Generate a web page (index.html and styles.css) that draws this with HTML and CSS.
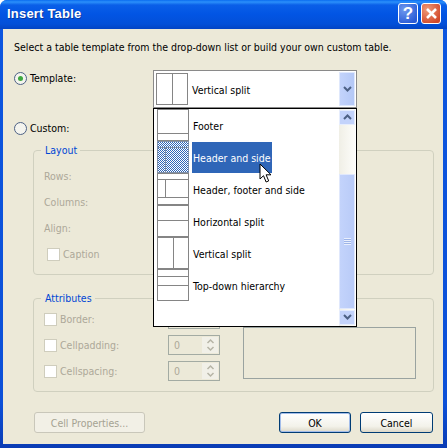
FILE: index.html
```html
<!DOCTYPE html>
<html lang="en">
<head>
    <meta charset="UTF-8">
    <title>Insert Table</title>
    <link rel="stylesheet" href="styles.css">
</head>
<body>
    <svg class="defs" width="0" height="0">
        <pattern id="dither" width="2" height="2" patternUnits="userSpaceOnUse">
            <rect width="2" height="2" fill="#fff"/>
            <rect width="1" height="1" fill="#2f66b8"/>
            <rect x="1" y="1" width="1" height="1" fill="#2f66b8"/>
        </pattern>
    </svg>
    <div class="window">
        <div class="titlebar">
            <span class="title">Insert Table</span>
            <div class="caption-btns">
                <span class="cap-btn help">?</span>
                <span class="cap-btn close">
                    <svg width="13" height="13" viewBox="0 0 13 13"><path d="M2 2l9 9M11 2l-9 9" stroke="#fff" stroke-width="2.6" fill="none"/></svg>
                </span>
            </div>
        </div>
        <div class="content">
            <p class="intro">Select a table template from the drop-down list or build your own custom table.</p>

            <div class="template-row">
                <label class="radio-label"><span class="radio on"></span>Template:</label>
                <div class="combo">
                    <svg class="preview combo-preview" width="32" height="32" viewBox="0 0 32 32"><rect x=".5" y=".5" width="31" height="31"/><path d="M16.5 0v32"/></svg>
                    <span class="combo-text">Vertical split</span>
                    <span class="combo-btn">
                        <svg width="9" height="7" viewBox="0 0 9 7"><path d="M1 1l3.5 3.5L8 1" class="chevron"/></svg>
                    </span>

                    <div class="combo-list">
                        <div class="items">
                            <div class="item">
                                <svg class="preview" width="32" height="32" viewBox="0 0 32 32"><rect x=".5" y=".5" width="31" height="31"/><path d="M0 24.5h32"/></svg>
                                <span class="item-text">Footer</span>
                            </div>
                            <div class="item selected">
                                <svg class="preview" width="32" height="32" viewBox="0 0 32 32"><rect x=".5" y=".5" width="31" height="31" fill="url(#dither)"/><path d="M0 6.5h32M8.5 7v25"/></svg>
                                <span class="item-text">Header and side</span>
                            </div>
                            <div class="item">
                                <svg class="preview" width="32" height="32" viewBox="0 0 32 32"><rect x=".5" y=".5" width="31" height="31"/><path d="M0 6.5h32M0 24.5h32M8.5 7v17"/></svg>
                                <span class="item-text">Header, footer and side</span>
                            </div>
                            <div class="item">
                                <svg class="preview" width="32" height="32" viewBox="0 0 32 32"><rect x=".5" y=".5" width="31" height="31"/><path d="M0 15.5h32"/></svg>
                                <span class="item-text">Horizontal split</span>
                            </div>
                            <div class="item">
                                <svg class="preview" width="32" height="32" viewBox="0 0 32 32"><rect x=".5" y=".5" width="31" height="31"/><path d="M16.5 0v32"/></svg>
                                <span class="item-text">Vertical split</span>
                            </div>
                            <div class="item">
                                <svg class="preview" width="32" height="32" viewBox="0 0 32 32"><rect x=".5" y=".5" width="31" height="31"/><path d="M0 7.5h32M0 16.5h32"/></svg>
                                <span class="item-text">Top-down hierarchy</span>
                            </div>
                        </div>
                        <div class="scrollbar">
                            <span class="scroll-btn">
                                <svg width="9" height="7" viewBox="0 0 9 7"><path d="M1 5l3.5-3.5L8 5" class="chevron"/></svg>
                            </span>
                            <div class="track">
                                <div class="thumb"><span class="grip"></span></div>
                            </div>
                            <span class="scroll-btn">
                                <svg width="9" height="7" viewBox="0 0 9 7"><path d="M1 1l3.5 3.5L8 1" class="chevron"/></svg>
                            </span>
                        </div>
                        <svg class="cursor" width="14" height="22" viewBox="0 0 14 22">
                            <path d="M1 1v15l3.5-3.3 2.6 6.3 2.6-1.1-2.6-6.1h4.9z" fill="#fff" stroke="#000"/>
                        </svg>
                    </div>
                </div>
            </div>

            <label class="radio-label custom-row"><span class="radio"></span>Custom:</label>

            <fieldset class="group layout-group">
                <legend>Layout</legend>
                <div class="row muted">Rows:</div>
                <div class="row muted">Columns:</div>
                <div class="row muted">Align:</div>
                <div class="row muted caption-row"><span class="check"></span>Caption</div>
            </fieldset>

            <fieldset class="group attr-group">
                <legend>Attributes</legend>
                <div class="attr-body">
                    <div class="attr-col">
                        <div class="row muted"><span class="check"></span>Border:<span class="spin"><span class="spin-val">0</span><span class="spin-btns"></span></span></div>
                        <div class="row muted">
                            <span class="check"></span>Cellpadding:
                            <span class="spin"><span class="spin-val">0</span>
                                <span class="spin-btns">
                                    <svg width="9" height="16" viewBox="0 0 9 16"><path d="M1.5 6l3-3 3 3M1.5 10l3 3 3-3" class="spin-arrows"/></svg>
                                </span>
                            </span>
                        </div>
                        <div class="row muted">
                            <span class="check"></span>Cellspacing:
                            <span class="spin"><span class="spin-val">0</span>
                                <span class="spin-btns">
                                    <svg width="9" height="16" viewBox="0 0 9 16"><path d="M1.5 6l3-3 3 3M1.5 10l3 3 3-3" class="spin-arrows"/></svg>
                                </span>
                            </span>
                        </div>
                    </div>
                    <div class="attr-preview"></div>
                </div>
            </fieldset>

            <div class="footer">
                <button class="btn cell-btn" disabled>Cell Properties...</button>
                <button class="btn ok-btn">OK</button>
                <button class="btn cancel-btn">Cancel</button>
            </div>
        </div>
    </div>
</body>
</html>
```

FILE: styles.css
```css
html, body {
    margin: 0;
    padding: 0;
    overflow: hidden;
}
body {
    width: 447px;
    height: 448px;
    font-family: "DejaVu Sans", sans-serif;
    font-stretch: condensed;
    font-size: 10.5px;
    color: #000;
    background: #fff;
}
.defs {
    position: absolute;
}
.window {
    width: 447px;
    height: 448px;
    box-sizing: border-box;
    display: flex;
    flex-direction: column;
    background: linear-gradient(#0c56e0, #0c50d8 90%, #0a3cb4);
    border-radius: 7px 7px 0 0;
    overflow: hidden;
}

/* title bar */
.titlebar {
    height: 29px;
    flex: none;
    display: flex;
    align-items: center;
    justify-content: space-between;
    padding: 0 6px 2px 7px;
    box-sizing: border-box;
    background: linear-gradient(#0a6cf0 0, #2b90fb 2px, #0a5fe8 5px, #0255e4 14px, #0350d8 24px, #0344c4 29px);
}
.title {
    color: #fff;
    font-family: "Liberation Sans", Arial, sans-serif;
    font-stretch: normal;
    font-size: 13px;
    font-weight: bold;
    letter-spacing: .2px;
    text-shadow: 1px 1px 0 #0a3aa0;
}
.caption-btns {
    display: flex;
    gap: 3px;
}
.cap-btn {
    width: 20px;
    height: 21px;
    box-sizing: border-box;
    border: 1px solid #fff;
    border-radius: 3px;
    display: flex;
    align-items: center;
    justify-content: center;
    color: #fff;
    font-family: "Liberation Sans", Arial, sans-serif;
    font-size: 17px;
    font-weight: bold;
}
.help {
    background: radial-gradient(circle at 30% 30%, #6f99ee, #2a5bd6 80%);
}
.close {
    background: radial-gradient(circle at 30% 30%, #ef9a78, #d2492a 80%);
}

/* dialog face */
.content {
    flex: 1;
    margin: 0 4px 4px 3px;
    background: #ece9d8;
    display: flex;
    flex-direction: column;
    min-height: 0;
}
.intro {
    margin: 11px 0 16px 11px;
    line-height: 14px;
}
.template-row {
    display: flex;
    height: 38px;
    padding-left: 11px;
}
.radio-label {
    display: flex;
    align-items: center;
    gap: 3px;
    height: 14px;
    margin-top: 1px;
    width: 139px;
    flex: none;
}
.radio {
    width: 13px;
    height: 13px;
    box-sizing: border-box;
    border: 1px solid #4d6185;
    border-radius: 50%;
    background: #f4f4ee;
    display: flex;
    align-items: center;
    justify-content: center;
}
.radio.on::after {
    content: "";
    width: 5px;
    height: 5px;
    border-radius: 50%;
    background: #3fa83f;
}
.custom-row {
    margin: 13px 0 8px 11px;
}

/* combo and its open list */
.combo {
    position: relative;
    width: 204px;
    height: 38px;
    box-sizing: border-box;
    border: 1px solid #8a8a8a;
    background: #fff;
    display: flex;
    align-items: center;
    padding: 0 1px 0 2px;
}
.preview {
    flex: none;
    display: block;
}
.preview rect {
    fill: #fff;
    stroke: #858585;
}
.preview path {
    stroke: #858585;
    fill: none;
}
.combo-text {
    flex: 1;
    margin-left: 4px;
    padding-top: 2px;
}
.combo-btn {
    width: 16px;
    height: 34px;
    display: flex;
    align-items: center;
    justify-content: center;
    background: linear-gradient(90deg, #c3d3fb, #b4c8f6);
    border: 1px solid #dfe8fc;
    box-sizing: border-box;
}
.chevron {
    fill: none;
    stroke: #4d6185;
    stroke-width: 2;
}
.combo-list {
    position: absolute;
    top: 37px;
    left: -1px;
    width: 204px;
    height: 219px;
    box-sizing: border-box;
    border: 1px solid #000;
    background: #fff;
    display: flex;
    z-index: 2;
}
.items {
    flex: 1;
    padding-left: 3px;
}
.item {
    height: 32px;
    display: flex;
    align-items: center;
    gap: 3px;
}
.item-text {
    height: 31px;
    line-height: 33px;
    padding: 0 1px;
    white-space: nowrap;
}
.selected .preview rect {
    fill: url(#dither);
    stroke: #7f8fa8;
}
.selected .preview path {
    stroke: #7f8fa8;
}
.selected .item-text {
    background: #2f66b8;
    color: #fff;
    width: 78px;
}
.scrollbar {
    width: 16px;
    margin-right: 1px;
    display: flex;
    flex-direction: column;
    background: linear-gradient(90deg, #f0efe6, #fdfdfa);
}
.scroll-btn {
    height: 15px;
    margin: 1px 0;
    display: flex;
    align-items: center;
    justify-content: center;
    background: #c3d3fb;
    border: 1px solid #e6edfd;
    box-sizing: border-box;
    flex: none;
}
.track {
    flex: 1;
    display: flex;
    flex-direction: column;
    justify-content: flex-end;
}
.thumb {
    height: 135px;
    box-sizing: border-box;
    background: linear-gradient(90deg, #c3d3fb, #b9cbf8);
    border: 1px solid #e0e8fc;
    display: flex;
    align-items: center;
    justify-content: center;
}
.grip {
    width: 7px;
    height: 7px;
    background: repeating-linear-gradient(#e9effd 0 1px, #9db4e8 1px 2px);
}
.cursor {
    position: absolute;
    left: 105px;
    top: 54px;
}

/* group boxes */
.group {
    margin: 0 9px 0 30px;
    padding: 0 10px;
    box-sizing: border-box;
    border: 1px solid #d0d0bf;
    border-radius: 4px;
    min-width: 0;
}
.group legend {
    margin-left: -3px;
    padding: 0 3px 0 4px;
    line-height: 14px;
    color: #0046d5;
}
.layout-group {
    height: 132px;
    padding-top: 6px;
    margin-bottom: 16px;
}
.attr-group {
    height: 101px;
}
.row {
    height: 26px;
    display: flex;
    align-items: center;
}
.muted {
    color: #aca899;
}
.check {
    width: 13px;
    height: 13px;
    box-sizing: border-box;
    border: 1px solid #cfcdbd;
    background: #fff;
    margin-right: 3px;
    flex: none;
}
.caption-row {
    padding-left: 3px;
}
.attr-body {
    display: flex;
    gap: 23px;
}
.attr-col {
    width: 176px;
    padding-top: 1px;
    flex: none;
}
.spin {
    margin-left: auto;
    width: 52px;
    height: 20px;
    box-sizing: border-box;
    border: 1px solid #a3aba3;
    display: flex;
    align-items: center;
    justify-content: space-between;
    padding: 0 1px 0 5px;
}
.spin-btns {
    width: 16px;
    height: 16px;
    background: #f1f0e8;
    display: block;
}
.spin-btns svg {
    display: block;
    margin: 0 auto;
}
.spin-arrows {
    fill: none;
    stroke: #b6b4a6;
    stroke-width: 1.5;
}
.attr-preview {
    width: 173px;
    height: 52px;
    margin-top: 22px;
    box-sizing: border-box;
    border: 1px solid #9aa3a0;
    flex: none;
}

/* bottom buttons */
.footer {
    margin-top: 20px;
    padding: 0 10px 0 31px;
    display: flex;
    align-items: center;
}
.btn {
    height: 21px;
    box-sizing: border-box;
    padding: 0;
    font-family: "DejaVu Sans", sans-serif;
    font-stretch: condensed;
    font-size: 10.5px;
    border: 1px solid #003c74;
    border-radius: 3px;
    background: linear-gradient(#fff, #f3f2ea 70%, #dcd8c8);
    color: #000;
}
.cell-btn {
    width: 111px;
    margin-right: auto;
    border-color: #c9c7ba;
    background: #f2f0e6;
    color: #a5a292;
}
.ok-btn {
    width: 72px;
    margin-right: 9px;
    box-shadow: inset 0 0 0 1px #a3bdea;
}
.cancel-btn {
    width: 73px;
}
```
